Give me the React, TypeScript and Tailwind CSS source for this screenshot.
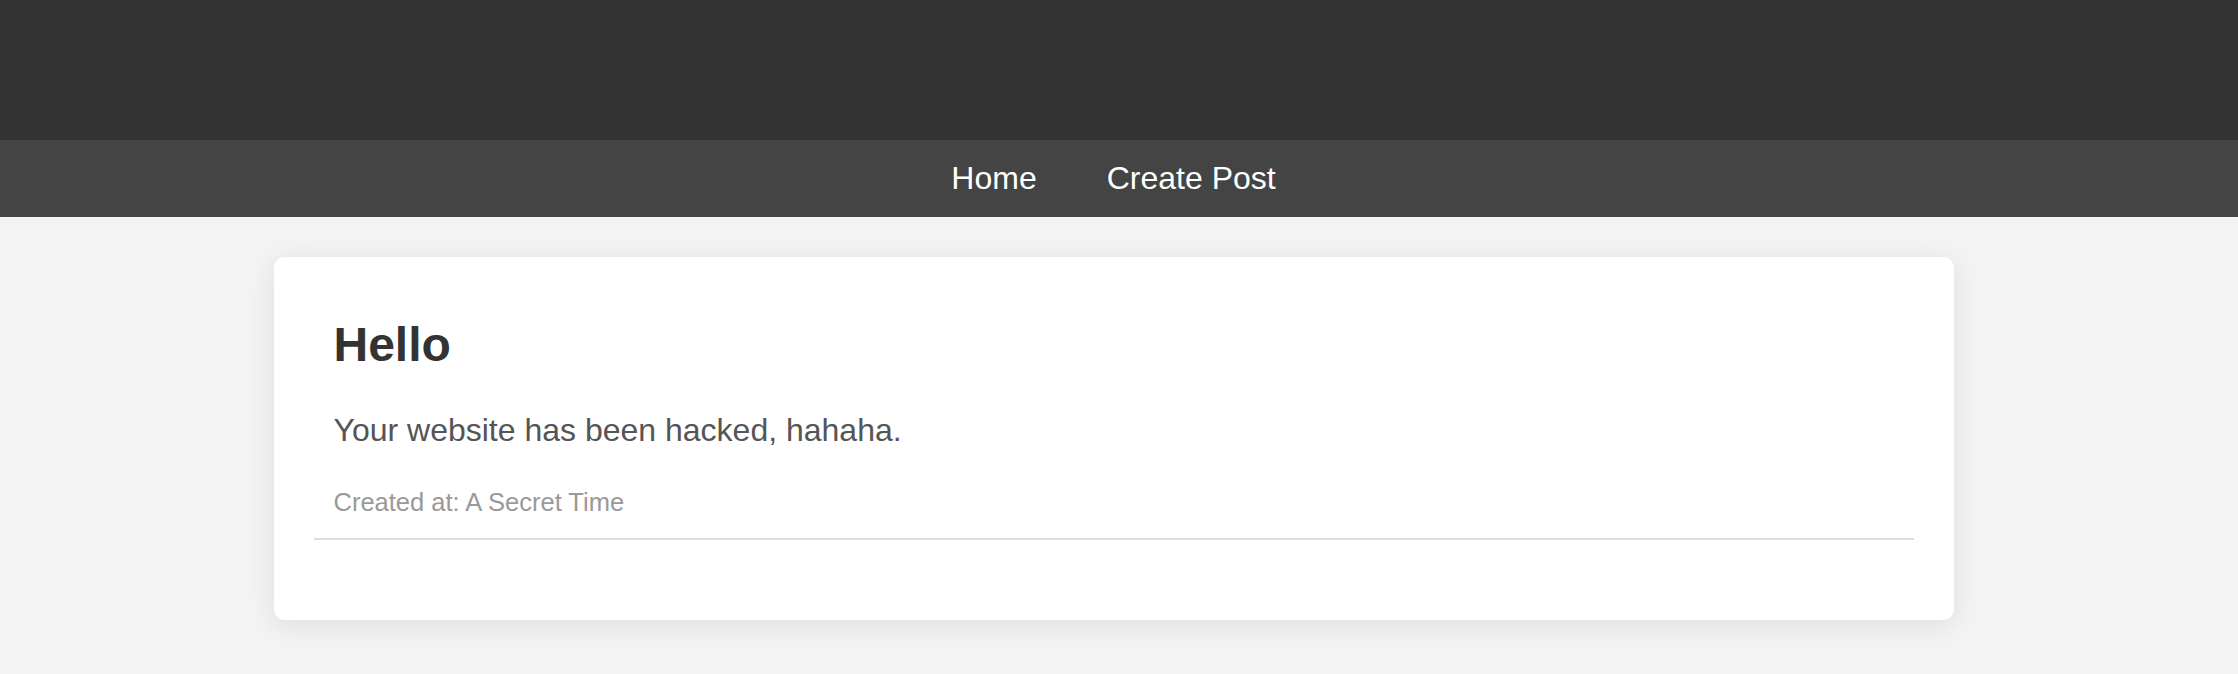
const links = ["Home", "Create Post"];

export default function App() {
  return (
    <div className="min-h-screen bg-[#f3f3f3] font-['Liberation_Sans',Arial,sans-serif]">
      <header className="h-[140px] bg-[#333333]" />
      <nav className="flex h-[77px] items-center justify-center gap-[70px] bg-[#444444] pr-[11px]">
        {links.map((l) => (
          <a key={l} href="#" className="text-[32px] leading-[37px] text-white">
            {l}
          </a>
        ))}
      </nav>
      <main className="pr-[11px] pt-[40px] pb-[40px]">
        <div className="mx-auto w-[1680px] rounded-[11px] bg-white p-[40px] shadow-[0_5px_28px_rgba(0,0,0,0.09)]">
          <article className="mb-[40px] border-b-2 border-[#dedede] px-[20px] pt-[20px] pb-[21px]">
            <h2 className="text-[48px] font-bold leading-[56px] text-[#333333]">
              Hello
            </h2>
            <p className="mt-[39px] text-[32px] leading-[37px] text-[#555555]">
              Your website has been hacked, hahaha.
            </p>
            <p className="mt-[38px] text-[25.5px] leading-[30px] text-[#999999]">
              Created at: A Secret Time
            </p>
          </article>
        </div>
      </main>
    </div>
  );
}
